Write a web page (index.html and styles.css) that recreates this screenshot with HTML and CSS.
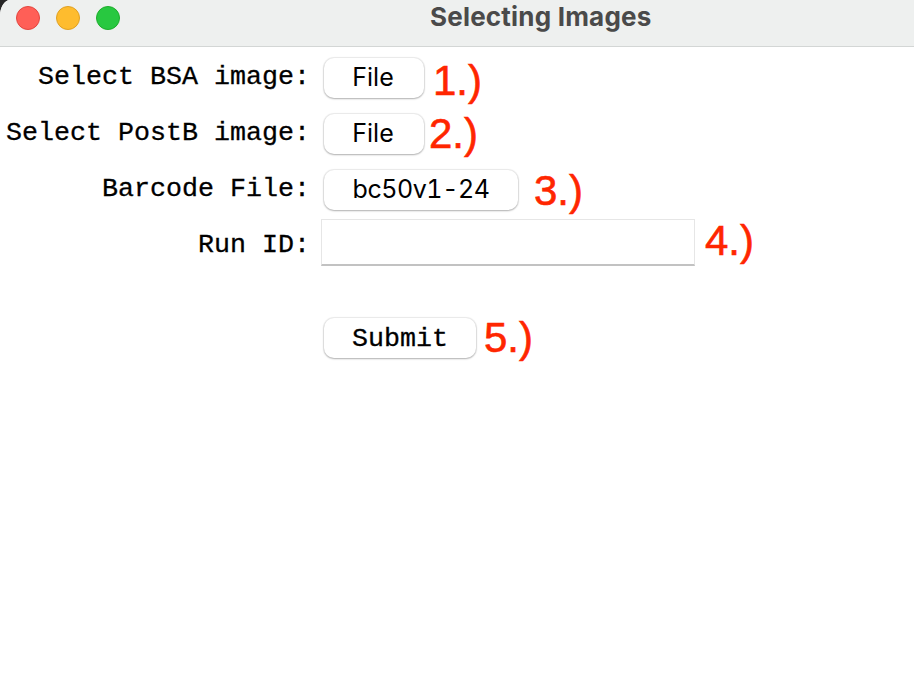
FILE: index.html
```html
<!DOCTYPE html>
<html lang="en">
<head>
<meta charset="utf-8">
<title>Selecting Images</title>
<link rel="stylesheet" href="styles.css">
</head>
<body>
<div class="window">
  <header class="titlebar">
    <div class="lights"><span class="light close"></span><span class="light minimize"></span><span class="light zoom"></span></div>
    <h1 class="title">Selecting Images</h1>
  </header>
  <form class="form">
    <div class="row"><span class="label">Select BSA image:</span><button class="button file" type="button">File</button><span class="note note-1">1.)</span></div>
    <div class="row"><span class="label">Select PostB image:</span><button class="button file" type="button">File</button><span class="note note-2">2.)</span></div>
    <div class="row"><span class="label">Barcode File:</span><button class="button barcode" type="button">bc50v1-24</button><span class="note note-3">3.)</span></div>
    <div class="row"><label class="label" for="run">Run ID:</label><input class="field" id="run" type="text"><span class="note note-4">4.)</span></div>
    <div class="row submit-row"><span class="label"></span><button class="button submit" type="button">Submit</button><span class="note note-5">5.)</span></div>
  </form>
</div>
</body>
</html>
```
FILE: styles.css
```css
* { box-sizing: border-box; }
body { margin: 0; background: #262626; overflow: hidden; }
.window { height: 684px; background: #fff; border-top-left-radius: 10px 16px; overflow: hidden; }
.titlebar {
  display: grid;
  grid-template-columns: 430px 1fr;
  height: 47px;
  background: #eef0ef;
  border-bottom: 1px solid #d3d6d5;
}
.lights { display: flex; gap: 16px; padding: 6px 0 0 16px; }
.light { width: 24px; height: 24px; border-radius: 50%; border: 1px solid; }
.close { background: #ff5f57; border-color: #e2463f; }
.minimize { background: #febc2e; border-color: #dfa023; }
.zoom { background: #28c840; border-color: #1dad2b; }
.title {
  margin: 0;
  font: 700 26px/34px Inter, sans-serif;
  letter-spacing: 0.2px;
  color: #4a4a4a;
  white-space: nowrap;
}
.form { padding-top: 3px; }
.row { display: flex; align-items: center; height: 56px; }
.label {
  flex: none;
  width: 310px;
  padding-bottom: 3px;
  text-align: right;
  font: 26.67px/32px "Liberation Mono", monospace;
  color: #000;
  -webkit-text-stroke: .3px #000;
  white-space: nowrap;
}
.button {
  flex: none;
  height: 40px;
  margin: 0 0 0 14px;
  padding: 0 0 2px;
  border: 0;
  border-radius: 10px;
  background: #fff;
  box-shadow: 0 0 1px 1px rgba(0,0,0,.08), 0 1px 2px rgba(0,0,0,.25);
  font: 25px/30px Inter, sans-serif;
  color: #000;
  white-space: nowrap;
}
.file { width: 100px; padding-right: 2px; }
.barcode { width: 194px; letter-spacing: -0.45px; font-kerning: none; font-variant-numeric: tabular-nums; }
.submit {
  width: 152px;
  padding: 2px 0 0;
  font: 26.67px/30px "Liberation Mono", monospace;
  -webkit-text-stroke: .3px #000;
}
.field {
  flex: none;
  width: 374px;
  height: 47px;
  margin: -8px 0 0 11px;
  border: 1px solid #e6e6e6;
  border-bottom: 2px solid #c2c2c2;
  background: #fff;
  outline: 0;
}
.submit-row { margin-top: 36px; }
.note {
  font: 42px/48px "Liberation Sans", sans-serif;
  color: #ff2600;
  -webkit-text-stroke: .6px #ff2600;
  white-space: nowrap;
}
.note-1 { margin: 6px 0 0 9px; }
.note-2 { margin: 0 0 0 5px; }
.note-3 { margin: 2px 0 0 16px; }
.note-4 { margin: -10px 0 0 10px; }
.note-5 { margin: 0 0 0 8px; }
```
